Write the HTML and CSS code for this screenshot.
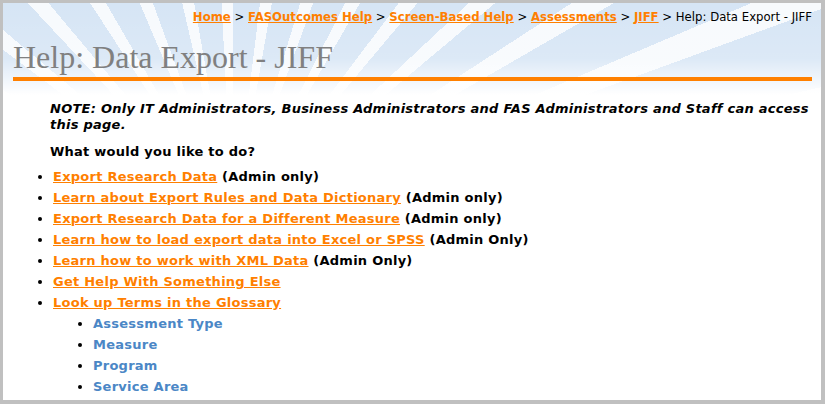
FILE: index.html
```html
<!DOCTYPE html>
<html lang="en">
<head>
    <meta charset="UTF-8">
    <title>Help: Data Export - JIFF</title>
    <link rel="stylesheet" href="styles.css">
</head>
<body>
    <div class="frame">
        <div class="header">
            <div class="crumbs">
                <a href="#">Home</a> &gt; <a href="#">FASOutcomes Help</a> &gt; <a href="#">Screen-Based Help</a> &gt; <a href="#">Assessments</a> &gt; <a href="#">JIFF</a> &gt; Help: Data Export - JIFF
            </div>
            <h1>Help: Data Export - JIFF</h1>
        </div>
        <div class="content">
            <p class="note">NOTE: Only IT Administrators, Business Administrators and FAS Administrators and Staff can access this page.</p>
            <p class="ask">What would you like to do?</p>
            <ul class="tasks">
                <li><a href="#">Export Research Data</a> (Admin only)</li>
                <li><a href="#">Learn about Export Rules and Data Dictionary</a> (Admin only)</li>
                <li><a href="#">Export Research Data for a Different Measure</a> (Admin only)</li>
                <li><a href="#">Learn how to load export data into Excel or SPSS</a> (Admin Only)</li>
                <li><a href="#">Learn how to work with XML Data</a> (Admin Only)</li>
                <li><a href="#">Get Help With Something Else</a></li>
                <li><a href="#">Look up Terms in the Glossary</a>
                    <ul class="glossary">
                        <li><a href="#">Assessment Type</a></li>
                        <li><a href="#">Measure</a></li>
                        <li><a href="#">Program</a></li>
                        <li><a href="#">Service Area</a></li>
                    </ul>
                </li>
            </ul>
        </div>
    </div>
</body>
</html>
```

FILE: styles.css
```css
/* page frame */
body {
    margin: 0;
    font-family: "DejaVu Sans", Verdana, sans-serif;
    font-size: 13px;
    color: #000;
    background: #fff;
}

.frame {
    box-sizing: border-box;
    height: 404px;
    border: 3px solid #c0c0c0;
    border-right-width: 4px;
    border-bottom-width: 4px;
    overflow: hidden;
    background: #fff;
}

/* header with light blue rays */
.header {
    padding: 7px 9px 0 10px;
    height: 92px;
    box-sizing: border-box;
    background:
        linear-gradient(to bottom, rgba(255,255,255,0) 0%, rgba(255,255,255,0.15) 60%, #fff 100%),
        repeating-conic-gradient(from 200deg at 230px 220px, #d6e5f5 0deg 7deg, #f7fafd 7deg 10deg);
}

.crumbs {
    text-align: right;
    font-size: 11.7px;
    line-height: 15px;
}

.crumbs a {
    color: #ff7f00;
    font-weight: bold;
}

h1 {
    margin: 14px 0 0;
    font-family: "Liberation Serif", "Times New Roman", serif;
    font-weight: normal;
    font-size: 32px;
    line-height: 36px;
    color: #808080;
    border-bottom: 4px solid #ff8000;
    padding-bottom: 2px;
}

/* main text */
.content {
    padding: 0 9px 0 47px;
    font-weight: bold;
    letter-spacing: 0.25px;
}

.note {
    margin: 6px 0 0;
    font-style: italic;
    line-height: 16px;
}

.ask {
    margin: 11px 0 6px;
    line-height: 16px;
}

.tasks {
    margin: 0;
    padding-left: 3px;
}

.tasks li {
    line-height: 21px;
}

.tasks a {
    color: #ff7f00;
}

.glossary {
    margin: 0;
    padding-left: 40px;
    list-style-type: disc;
}

.glossary a {
    color: #4b87c6;
    text-decoration: none;
}
```
